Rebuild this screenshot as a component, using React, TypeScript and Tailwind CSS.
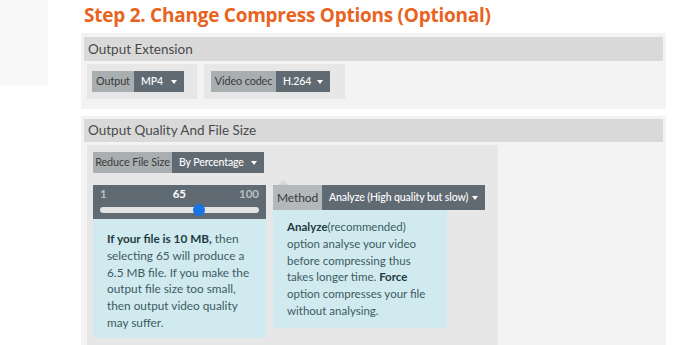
import React from "react";

const font = { fontFamily: 'Lato, "Noto Sans", sans-serif' };
const titleFont = { fontFamily: '"Open Sans", "Noto Sans", sans-serif' };

function Caret() {
  return <span className="ml-auto inline-block w-0 h-0 border-l-[3px] border-r-[3px] border-t-[4px] border-l-transparent border-r-transparent border-t-white" />;
}

function Select({ label, value, labelW, valueW, h, labelBg = "bg-[#a9aeb1]", labelText = "text-[10.8px]" }: { label: string; value: string; labelW: string; valueW: string; h: string; labelBg?: string; labelText?: string }) {
  return (
    <div className={`flex ${h} text-[10.5px] tracking-[-0.1px] whitespace-nowrap`}>
      <div className={`${labelW} ${labelBg} ${labelText} text-[#3a3a3a] flex items-center justify-center`}>{label}</div>
      <div className={`${valueW} bg-[#5f6a73] text-white font-medium flex items-center pl-[7px] pr-[7px]`}>
        <span>{value}</span>
        <Caret />
      </div>
    </div>
  );
}

export default function App() {
  return (
    <div className="flex w-[699px] h-[345px] overflow-hidden bg-white" style={font}>
      <div className="w-[48px] shrink-0">
        <div className="h-[85px] bg-[#f8f8f8]" />
      </div>
      <div className="ml-[33px] w-[585px] shrink-0">
        <h2 className="pl-[3px] pt-[2px] h-[33px] text-[19px] leading-[26px] font-bold text-[#e8641e] tracking-[-0.25px]" style={titleFont}>
          Step 2. Change Compress Options (Optional)
        </h2>

        <div className="bg-[#f3f3f3] px-[3px] pt-[4px] pb-[10px]">
          <div className="h-[24px] bg-[#d9d9d9] pl-[4px] flex items-center text-[13.5px] text-[#4a4a4a]">Output Extension</div>
          <div className="flex gap-[7px] pl-[3px] pt-[3px]">
            <div className="w-[110px] h-[35px] bg-[#e7e7e7] pl-[5px] pt-[7px]">
              <Select label="Output" value="MP4" labelW="w-[42px]" valueW="w-[50px]" h="h-[21px]" />
            </div>
            <div className="w-[141px] h-[35px] bg-[#e7e7e7] pl-[7px] pt-[7px]">
              <Select label="Video codec" value="H.264" labelW="w-[65px]" valueW="w-[54px]" h="h-[21px]" />
            </div>
          </div>
        </div>

        <div className="mt-[7px] bg-[#f3f3f3] px-[3px] pt-[3px] h-[240px]">
          <div className="h-[23px] bg-[#d9d9d9] pl-[4px] flex items-center text-[13.5px] text-[#4a4a4a]">Output Quality And File Size</div>
          <div className="ml-[3px] mt-[3px] w-[411px] h-[210px] bg-[#e7e7e7] pl-[6px] pt-[7px]">
            <Select label="Reduce File Size" value="By Percentage" labelW="w-[79px]" valueW="w-[92px]" h="h-[21px]" />
            <div className="flex gap-[7px] mt-[12px]">
              <div className="w-[173px]">
                <div className="h-[34px] bg-[#5f6a73] px-[7px] pt-[2px]">
                  <div className="flex text-[11.5px] leading-[14px] font-bold">
                    <span className="text-[#b9c0c5]">1</span>
                    <span className="text-white ml-[66px]">65</span>
                    <span className="text-[#b9c0c5] ml-auto">100</span>
                  </div>
                  <div className="relative mt-[6px] h-[6px] rounded-full bg-[#e3e3e3]">
                    <div className="absolute left-[93px] top-[-3px] w-[12px] h-[12px] rounded-full bg-[#1773e6]" />
                  </div>
                </div>
                <div className="h-[119px] bg-[#d1eaf0] pl-[14px] pr-[4px] pt-[12px] text-[11.8px] leading-[16.8px] text-[#3d5a60]">
                  <b className="text-[#1e3b41]">If your file is 10 MB,</b> then<br />
                  selecting 65 will produce a<br />
                  6.5 MB file. If you make the<br />
                  output file size too small,<br />
                  then output video quality<br />
                  may suffer.
                </div>
              </div>
              <div className="w-[212px]">
                <div className="relative">
                  <div className="absolute left-[5px] top-[-5px] w-0 h-0 border-l-[5px] border-r-[5px] border-b-[5px] border-l-transparent border-r-transparent border-b-[#d6d6d6]" />
                </div>
                <Select label="Method" value="Analyze (High quality but slow)" labelW="w-[49px]" labelText="text-[12px]" valueW="w-[163px]" h="h-[25px]" labelBg="bg-[#b3b8bb]" />
                <div className="w-[174px] h-[118px] bg-[#d1eaf0] pl-[14px] pr-[4px] pt-[9px] text-[11.5px] leading-[16.8px] text-[#3d5a60]">
                  <b className="text-[#1e3b41]">Analyze</b>(recommended)<br />
                  option analyse your video<br />
                  before compressing thus<br />
                  takes longer time. <b className="text-[#1e3b41]">Force</b><br />
                  option compresses your file<br />
                  without analysing.
                </div>
              </div>
            </div>
          </div>
        </div>
      </div>
    </div>
  );
}
